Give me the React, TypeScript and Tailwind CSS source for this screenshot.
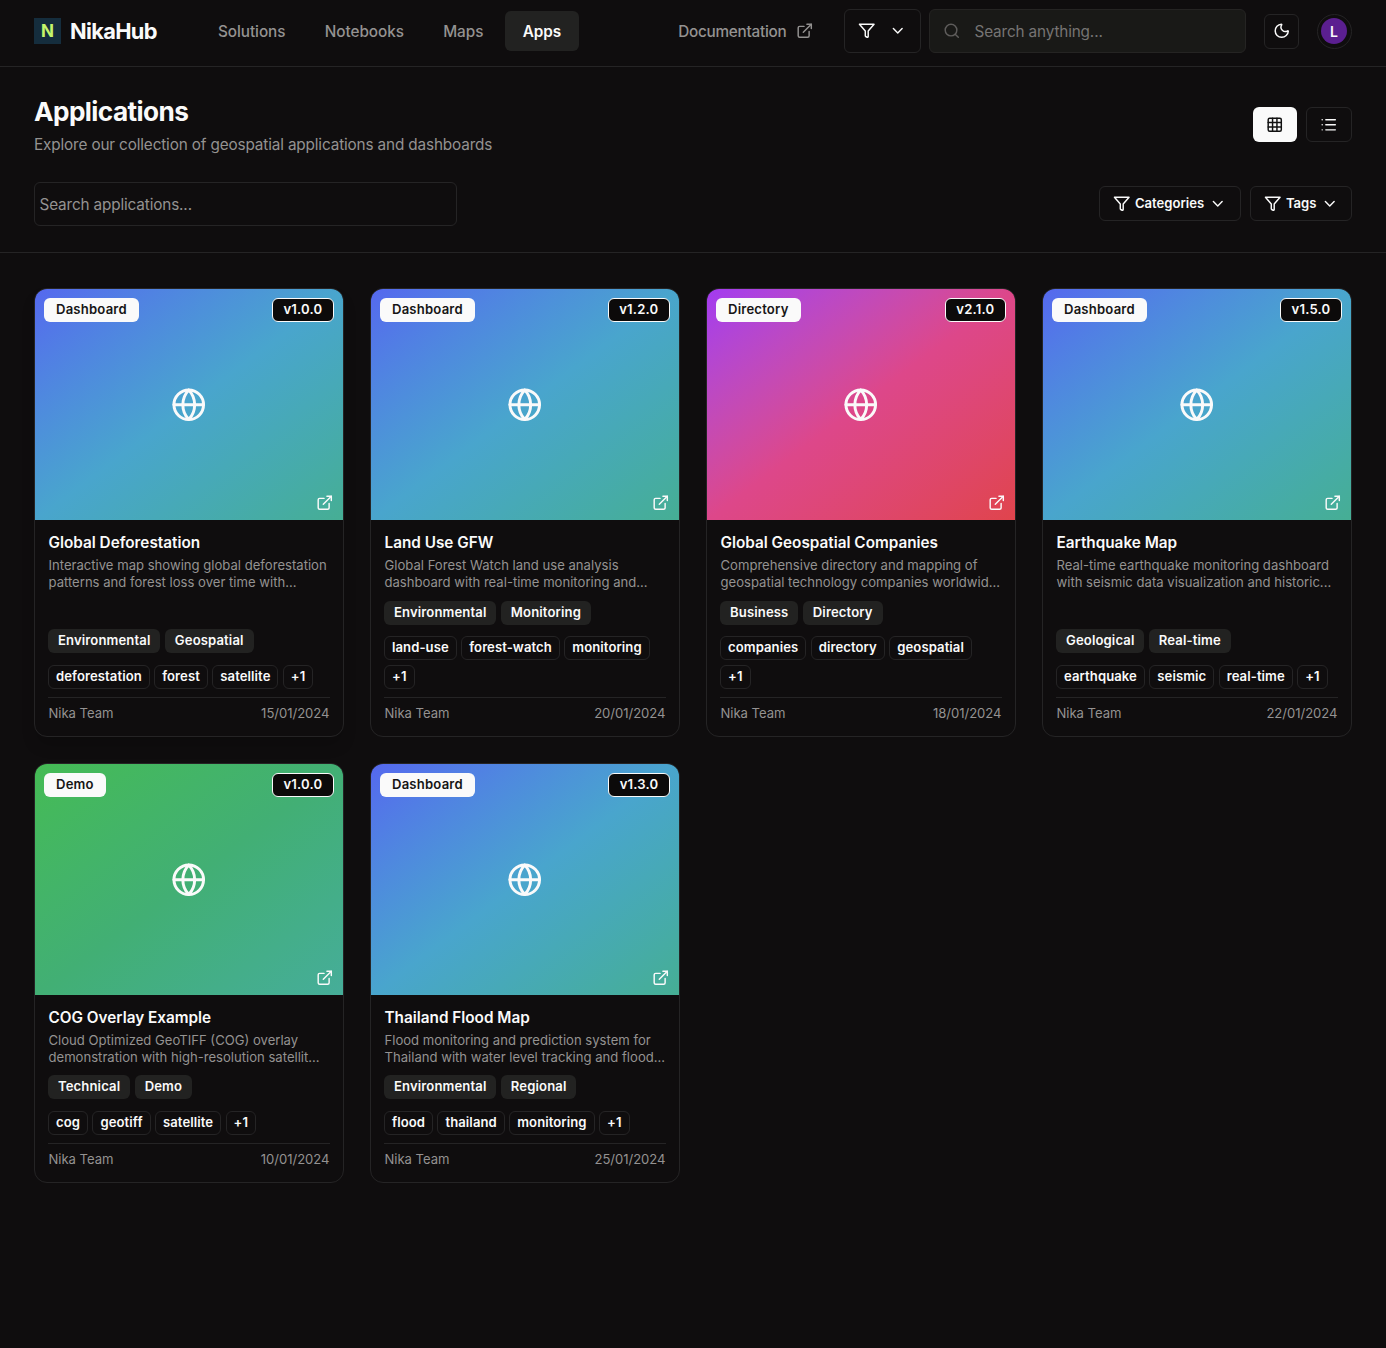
import React from "react";
import { ChevronDown, ExternalLink, Globe, Grid3x3, List, Moon, Search } from "lucide-react";

interface AppEntry {
  title: string;
  kind: string;
  version: string;
  description: [string, string];
  categories: string[];
  tags: string[];
  date: string;
  gradient: string;
  raised?: boolean;
}

const BLUE = "bg-linear-to-br from-[#5568ee] via-[#49a5cd] to-[#46ae94]";
const PINK = "bg-linear-to-br from-[#a33af0] via-[#dd478a] to-[#e0444c]";
const GREEN = "bg-linear-to-br from-[#45bb54] via-[#42af74] to-[#46ad99]";

const APPS: AppEntry[] = [
  {
    title: "Global Deforestation",
    kind: "Dashboard",
    version: "v1.0.0",
    description: ["Interactive map showing global deforestation", "patterns and forest loss over time with..."],
    categories: ["Environmental", "Geospatial"],
    tags: ["deforestation", "forest", "satellite", "+1"],
    date: "15/01/2024",
    gradient: BLUE,
    raised: true,
  },
  {
    title: "Land Use GFW",
    kind: "Dashboard",
    version: "v1.2.0",
    description: ["Global Forest Watch land use analysis", "dashboard with real-time monitoring and..."],
    categories: ["Environmental", "Monitoring"],
    tags: ["land-use", "forest-watch", "monitoring", "+1"],
    date: "20/01/2024",
    gradient: BLUE,
  },
  {
    title: "Global Geospatial Companies",
    kind: "Directory",
    version: "v2.1.0",
    description: ["Comprehensive directory and mapping of", "geospatial technology companies worldwid..."],
    categories: ["Business", "Directory"],
    tags: ["companies", "directory", "geospatial", "+1"],
    date: "18/01/2024",
    gradient: PINK,
  },
  {
    title: "Earthquake Map",
    kind: "Dashboard",
    version: "v1.5.0",
    description: ["Real-time earthquake monitoring dashboard", "with seismic data visualization and historic..."],
    categories: ["Geological", "Real-time"],
    tags: ["earthquake", "seismic", "real-time", "+1"],
    date: "22/01/2024",
    gradient: BLUE,
  },
  {
    title: "COG Overlay Example",
    kind: "Demo",
    version: "v1.0.0",
    description: ["Cloud Optimized GeoTIFF (COG) overlay", "demonstration with high-resolution satellit..."],
    categories: ["Technical", "Demo"],
    tags: ["cog", "geotiff", "satellite", "+1"],
    date: "10/01/2024",
    gradient: GREEN,
  },
  {
    title: "Thailand Flood Map",
    kind: "Dashboard",
    version: "v1.3.0",
    description: ["Flood monitoring and prediction system for", "Thailand with water level tracking and flood..."],
    categories: ["Environmental", "Regional"],
    tags: ["flood", "thailand", "monitoring", "+1"],
    date: "25/01/2024",
    gradient: BLUE,
  },
];

const NAV = ["Solutions", "Notebooks", "Maps", "Apps"];

const FilterIcon: React.FC<{ size?: number }> = ({ size = 17.5 }) => (
  <svg
    width={size}
    height={size}
    viewBox="0 0 24 24"
    fill="none"
    stroke="currentColor"
    strokeWidth={2}
    strokeLinecap="round"
    strokeLinejoin="round"
    className="shrink-0"
  >
    <path d="M22 3H2l8 9.46V19a1 1 0 0 0 .55.9l2 1A1 1 0 0 0 14 20v-7.54z" />
  </svg>
);

const Header: React.FC = () => (
  <header className="flex h-[67px] items-center border-b border-[#252425] px-[34px] pb-[4px]">
    <div className="flex w-[166.5px] items-center gap-[9px]">
      <div className="flex h-[26px] w-[27px] items-center justify-center bg-[#152d3d] text-[17px] font-bold leading-none text-[#c5f56b]">
        N
      </div>
      <span className="pt-[2px] text-[21.8px] font-bold leading-none tracking-[-0.65px]">NikaHub</span>
    </div>
    <nav className="flex gap-[4.4px]">
      {NAV.map((item) => (
        <a
          key={item}
          className={
            item === "Apps"
              ? "flex h-10 items-center rounded-[6px] bg-[#222221] px-[17.5px] pt-[2px] text-[15.3px] font-semibold tracking-[-0.06px]"
              : "flex h-10 items-center rounded-[6px] px-[17.5px] pt-[2px] text-[15.3px] font-medium tracking-[-0.06px] text-[#949291]"
          }
        >
          {item}
        </a>
      ))}
    </nav>
    <div className="ml-auto flex items-center">
      <a className="mr-[31px] flex items-center gap-[9px] text-[15.3px] font-medium tracking-[-0.25px] text-[#949291]">
        <span className="pt-[2px]">Documentation</span>
        <ExternalLink size={17.5} />
      </a>
      <button className="mr-2 flex h-11 w-[77px] items-center justify-between rounded-[6px] border border-[#252425] pl-[13px] pr-[14px]">
        <FilterIcon />
        <ChevronDown size={17.5} />
      </button>
      <div className="mr-[18px] flex h-11 w-[317px] items-center gap-[14px] rounded-[6px] border border-[#252423] bg-[#191917] pl-[13px] text-[15.3px] tracking-[-0.14px] text-[#767473]">
        <Search size={17.5} className="text-[#5e5c5b]" />
        <span className="pt-[2px]">Search anything...</span>
      </div>
      <button className="mr-[18px] flex size-[35px] items-center justify-center rounded-[6px] border border-[#252425]">
        <Moon size={17.5} />
      </button>
      <div className="flex size-[35px] items-center justify-center rounded-full border border-[#252425] pr-[1px]">
        <span className="flex size-[26px] items-center justify-center rounded-full bg-[#5b1f90] text-[14px] font-semibold">
          L
        </span>
      </div>
    </div>
  </header>
);

const Toolbar: React.FC = () => (
  <section className="flex h-[186px] flex-col border-b border-[#252425] px-[34px] pt-[27px]">
    <div className="flex justify-between">
      <div>
        <h1 className="text-[26.2px] font-bold leading-[35px] tracking-[-0.58px]">Applications</h1>
        <p className="mt-[5px] text-[15.3px] leading-[22px] tracking-[-0.14px] text-[#949291]">
          Explore our collection of geospatial applications and dashboards
        </p>
      </div>
      <div className="mt-[13px] flex gap-[9px]">
        <button className="flex h-[35px] w-11 items-center justify-center rounded-[6px] bg-[#fafafa] text-[#111]">
          <Grid3x3 size={17.5} />
        </button>
        <button className="flex h-[35px] w-[46px] items-center justify-center rounded-[6px] border border-[#252425]">
          <List size={17.5} />
        </button>
      </div>
    </div>
    <div className="mt-[26px] flex items-start justify-between">
      <div className="flex h-11 w-[423px] items-center rounded-[6px] border border-[#252425] pl-[4.5px] pt-[2px] text-[15.3px] tracking-[-0.14px] text-[#949291]">
        Search applications...
      </div>
      <div className="mt-1 flex gap-[9px]">
        <FilterButton label="Categories" width="w-[142px]" />
        <FilterButton label="Tags" width="w-[102px]" />
      </div>
    </div>
  </section>
);

const FilterButton: React.FC<{ label: string; width: string }> = ({ label, width }) => (
  <button
    className={`flex h-[35px] items-center rounded-[6px] border border-[#252425] pl-[13px] text-[13.1px] font-semibold ${width}`}
  >
    <FilterIcon />
    <span className="ml-[4.4px] mr-[4.4px]">{label}</span>
    <ChevronDown size={17.5} />
  </button>
);

const AppCard: React.FC<{ app: AppEntry }> = ({ app }) => (
  <article
    className={`flex flex-col overflow-hidden rounded-[13px] border border-[#252425] ${
      app.raised ? "shadow-[0_10px_16px_-3px_rgba(0,0,0,0.2)]" : ""
    }`}
  >
    <div className={`relative flex h-[231px] shrink-0 items-center justify-center pr-[1px] ${app.gradient}`}>
      <Globe size={35.5} />
      <span className="absolute left-[9px] top-[9px] flex h-6 items-center rounded-[6px] bg-[#fafafa] px-[12px] text-[13.1px] font-semibold tracking-[0.2px] text-[#161515]">
        {app.kind}
      </span>
      <span className="absolute right-[9px] top-[9px] flex h-6 items-center rounded-[6px] border border-[#fafafa] bg-[#0c0a0a] px-[10.6px] text-[13.1px] font-semibold tracking-[0.2px]">
        {app.version}
      </span>
      <ExternalLink size={17.5} className="absolute bottom-[9px] right-[10px]" />
    </div>
    <div className="flex grow flex-col px-[13px] pb-[13.6px] pt-[13px]">
      <h3 className="pl-[0.5px] text-[15.3px] font-semibold leading-[19px]">{app.title}</h3>
      <p className="mt-[4.6px] whitespace-nowrap pl-[0.5px] text-[13.1px] leading-[17.4px] text-[#949291]">
        {app.description[0]}
        <br />
        {app.description[1]}
      </p>
      <div className="mt-auto flex gap-[4.4px]">
        {app.categories.map((c) => (
          <span
            key={c}
            className="flex h-[24px] items-center rounded-[6px] bg-[#222221] px-[10px] text-[13.1px] font-semibold tracking-[0.12px]"
          >
            {c}
          </span>
        ))}
      </div>
      <div className="mt-[11.4px] flex flex-wrap gap-x-[4.4px] gap-y-[4.4px]">
        {app.tags.map((t) => (
          <span
            key={t}
            className="flex h-[24px] items-center rounded-[6px] border border-[#252425] px-[7px] text-[13.1px] font-semibold tracking-[0.08px]"
          >
            {t}
          </span>
        ))}
      </div>
      <div className="mt-[8.3px] flex justify-between border-t border-[#252425] px-[0.5px] pt-[7px] text-[13.1px] leading-[17.4px] tracking-[-0.04px] text-[#949291]">
        <span>Nika Team</span>
        <span>{app.date}</span>
      </div>
    </div>
  </article>
);

export default function App() {
  return (
    <div className="min-h-[1348px] w-[1386px] bg-[#0f0d0e] font-['Inter',sans-serif] text-[#fafafa]">
      <Header />
      <Toolbar />
      <main className="grid grid-cols-4 grid-rows-[449px_420px] gap-[26px] px-[34px] pt-[35px]">
        {APPS.map((app) => (
          <AppCard key={app.title} app={app} />
        ))}
      </main>
    </div>
  );
}
